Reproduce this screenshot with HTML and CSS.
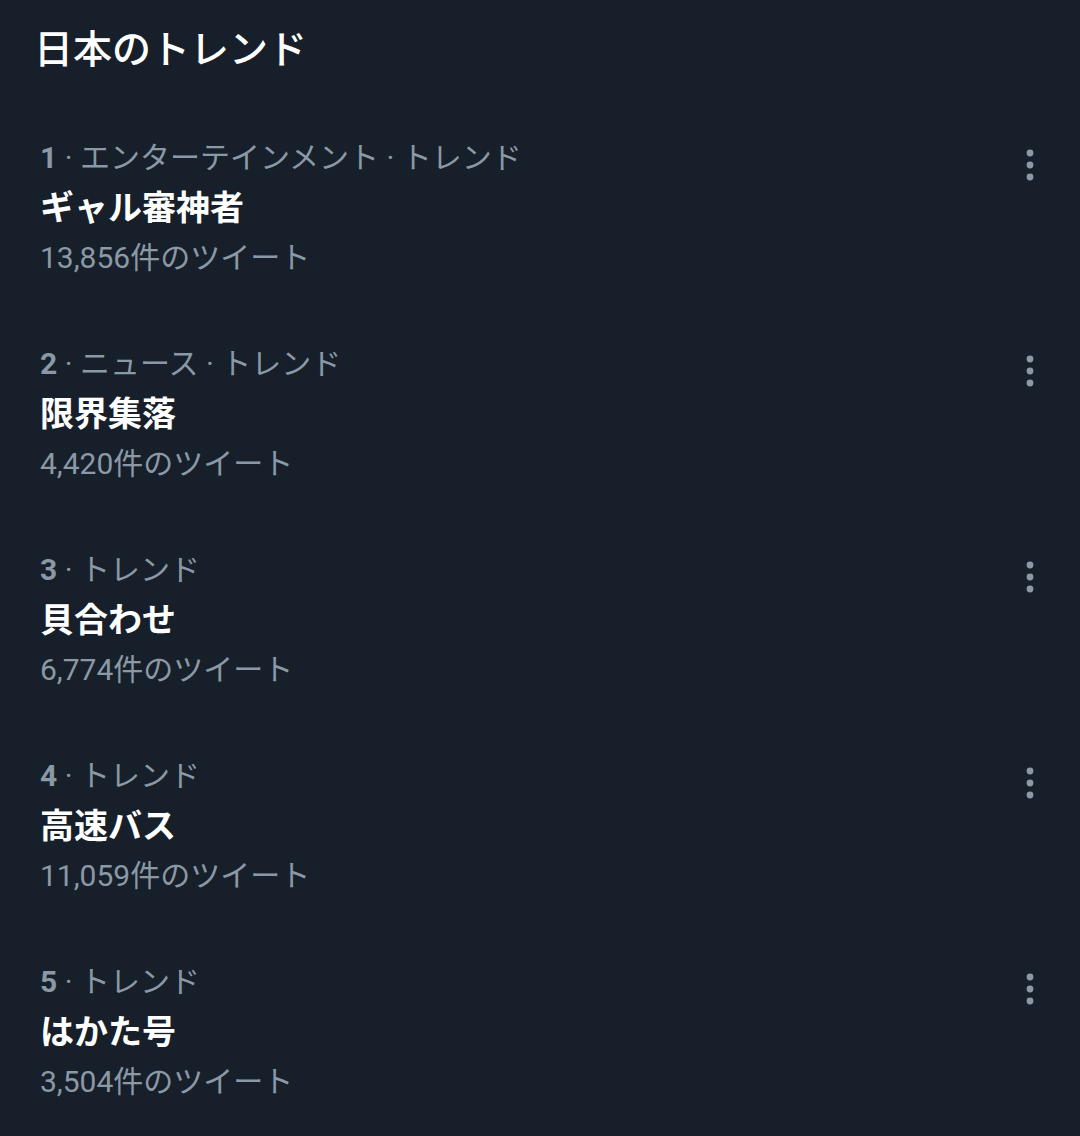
FILE: index.html
```html
<!DOCTYPE html>
<html lang="ja">
<head>
<meta charset="utf-8">
<link rel="stylesheet" href="styles.css">
</head>
<body>
<main class="panel">
  <h1 class="title">日本のトレンド</h1>
  <ul class="trends">
    <li class="trend">
      <div class="info">
        <div class="meta"><b>1</b> · エンターテインメント · トレンド</div>
        <div class="name">ギャル審神者</div>
        <div class="count">13,856件のツイート</div>
      </div>
      <svg class="more" viewBox="0 0 14 36" width="14" height="36"><circle cx="7" cy="6" r="3.4"/><circle cx="7" cy="18" r="3.4"/><circle cx="7" cy="30" r="3.4"/></svg>
    </li>
    <li class="trend">
      <div class="info">
        <div class="meta"><b>2</b> · ニュース · トレンド</div>
        <div class="name">限界集落</div>
        <div class="count">4,420件のツイート</div>
      </div>
      <svg class="more" viewBox="0 0 14 36" width="14" height="36"><circle cx="7" cy="6" r="3.4"/><circle cx="7" cy="18" r="3.4"/><circle cx="7" cy="30" r="3.4"/></svg>
    </li>
    <li class="trend">
      <div class="info">
        <div class="meta"><b>3</b> · トレンド</div>
        <div class="name">貝合わせ</div>
        <div class="count">6,774件のツイート</div>
      </div>
      <svg class="more" viewBox="0 0 14 36" width="14" height="36"><circle cx="7" cy="6" r="3.4"/><circle cx="7" cy="18" r="3.4"/><circle cx="7" cy="30" r="3.4"/></svg>
    </li>
    <li class="trend">
      <div class="info">
        <div class="meta"><b>4</b> · トレンド</div>
        <div class="name">高速バス</div>
        <div class="count">11,059件のツイート</div>
      </div>
      <svg class="more" viewBox="0 0 14 36" width="14" height="36"><circle cx="7" cy="6" r="3.4"/><circle cx="7" cy="18" r="3.4"/><circle cx="7" cy="30" r="3.4"/></svg>
    </li>
    <li class="trend">
      <div class="info">
        <div class="meta"><b>5</b> · トレンド</div>
        <div class="name">はかた号</div>
        <div class="count">3,504件のツイート</div>
      </div>
      <svg class="more" viewBox="0 0 14 36" width="14" height="36"><circle cx="7" cy="6" r="3.4"/><circle cx="7" cy="18" r="3.4"/><circle cx="7" cy="30" r="3.4"/></svg>
    </li>
  </ul>
</main>
</body>
</html>
```
FILE: styles.css
```css
html, body {
  margin: 0;
  padding: 0;
  background: #17202a;
}
body {
  font-family: Roboto, "Noto Sans CJK JP", sans-serif;
  color: #ffffff;
  width: 1080px;
  height: 1136px;
  overflow: hidden;
}
.panel {
  padding: 25px 0 0 0;
}
.title {
  margin: 0 0 30px 34px;
  font-size: 39px;
  line-height: 50px;
  font-weight: 500;
  color: #ffffff;
}
.trends {
  list-style: none;
  margin: 0;
  padding: 0;
}
.trend {
  display: flex;
  align-items: flex-start;
  justify-content: space-between;
  padding: 28px 43px 28px 40px;
}
.info {
  display: flex;
  flex-direction: column;
}
.meta {
  font-size: 30px;
  line-height: 50px;
  color: #8b98a5;
}
.meta b {
  font-weight: 700;
}
.name {
  font-size: 34px;
  line-height: 50px;
  font-weight: 700;
  color: #ffffff;
}
.count {
  font-size: 30px;
  line-height: 50px;
  color: #8b98a5;
}
.more {
  fill: #8b98a5;
  margin-top: 14px;
}
```
